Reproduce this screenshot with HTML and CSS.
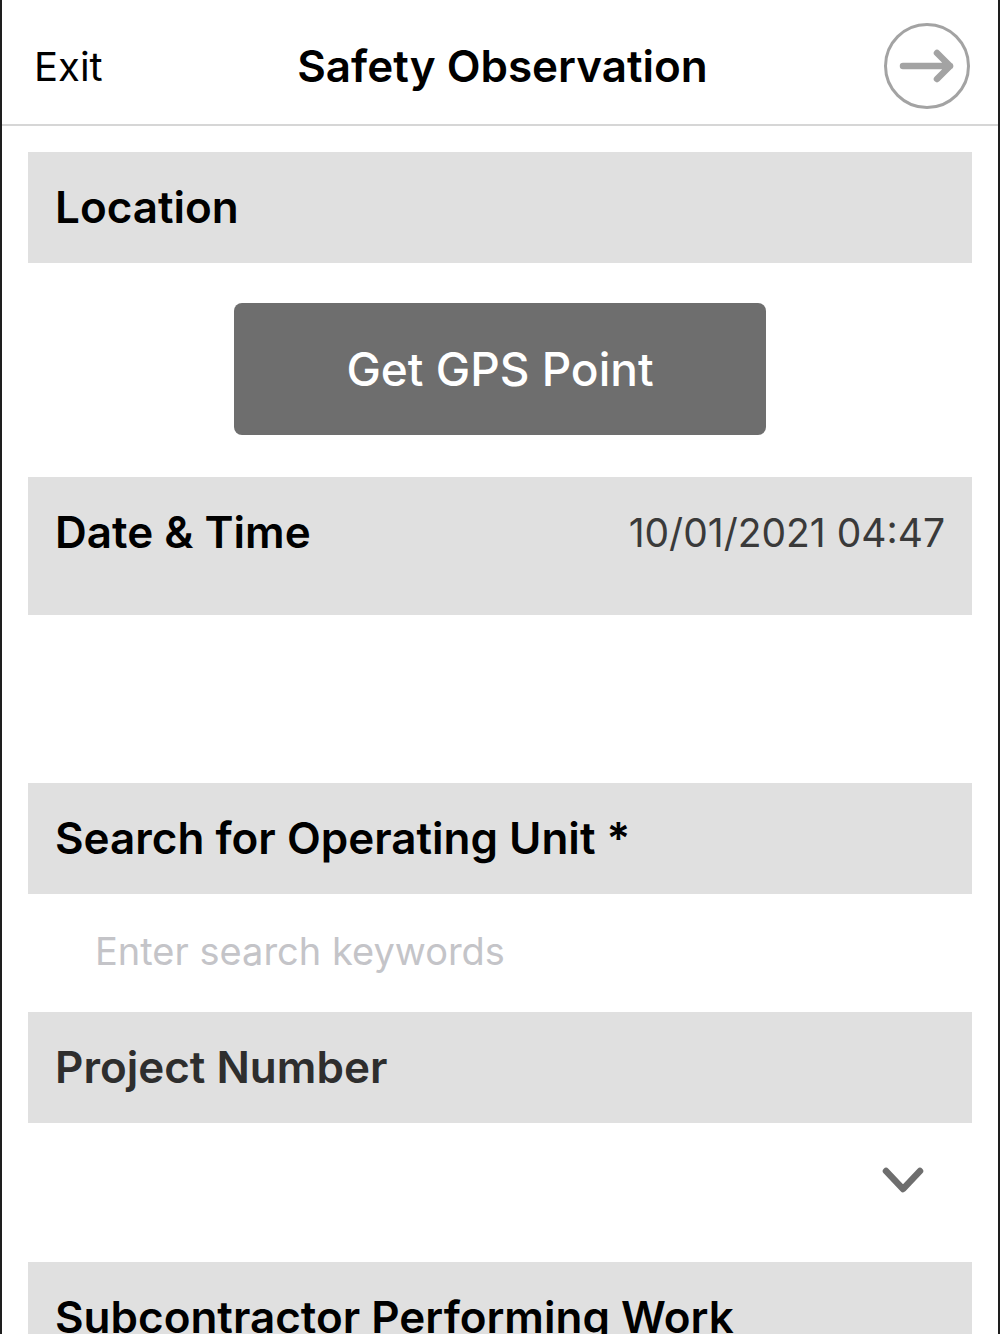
FILE: index.html
```html
<!DOCTYPE html>
<html lang="en">
<head>
    <meta charset="UTF-8">
    <meta name="viewport" content="width=device-width, initial-scale=1.0">
    <title>Safety Observation</title>
    <link rel="stylesheet" href="styles.css">
</head>
<body>
    <div class="screen">
        <header class="topbar">
            <span class="exit">Exit</span>
            <h1 class="title">Safety Observation</h1>
            <button class="next-btn" type="button" aria-label="Next">
                <svg width="88" height="88" viewBox="0 0 88 88">
                    <circle cx="44" cy="44" r="41.5" fill="none" stroke="#a3a3a3" stroke-width="3"/>
                    <path d="M20 44 H67 M54 31 L67 44 L54 57" fill="none" stroke="#a3a3a3" stroke-width="6.5" stroke-linecap="round" stroke-linejoin="round"/>
                </svg>
            </button>
        </header>

        <main class="form">
            <div class="field">
                <span class="field-label">Location</span>
            </div>

            <div class="gps-row">
                <button class="gps-btn" type="button">Get GPS Point</button>
            </div>

            <div class="field field-tall">
                <span class="field-label">Date &amp; Time</span>
                <span class="field-value">10/01/2021 04:47</span>
            </div>

            <div class="spacer"></div>

            <div class="field">
                <span class="field-label">Search for Operating Unit *</span>
            </div>
            <input class="search-input" type="text" placeholder="Enter search keywords">

            <div class="field">
                <span class="field-label muted">Project Number</span>
            </div>
            <div class="select-row">
                <svg width="44" height="28" viewBox="0 0 44 28">
                    <path d="M5 4 L22 22 L39 4" fill="none" stroke="#6e6e6e" stroke-width="6.5" stroke-linecap="round" stroke-linejoin="round"/>
                </svg>
            </div>

            <div class="field">
                <span class="field-label">Subcontractor Performing Work</span>
            </div>
        </main>
    </div>
</body>
</html>
```

FILE: styles.css
```css
body {
    margin: 0;
    font-family: Inter, "Noto Sans", sans-serif;
    background: #fff;
    overflow: hidden;
}
.screen {
    width: 1000px;
    height: 1334px;
    box-sizing: border-box;
    border-left: 2px solid #1e1e1e;
    border-right: 2px solid #1e1e1e;
    overflow: hidden;
}
.topbar {
    height: 126px;
    box-sizing: border-box;
    border-bottom: 2px solid #d6d6d6;
    display: grid;
    grid-template-columns: 1fr auto 1fr;
    align-items: center;
    padding: 8px 27px 0 32px;
}
.exit {
    font-size: 40px;
    color: #000;
}
.title {
    margin: 0;
    font-size: 44px;
    font-weight: 600;
    color: #000;
}
.next-btn {
    justify-self: end;
    background: none;
    border: none;
    padding: 0;
    display: flex;
}
.form {
    padding: 26px 26px 0;
}
.field {
    background-color: #e0e0e0;
    height: 111px;
    padding: 0 27px;
    display: flex;
    justify-content: space-between;
}
.field-tall {
    height: 138px;
}
.field-label {
    font-size: 44px;
    font-weight: 600;
    line-height: 111px;
    color: #000;
}
.field-label.muted {
    color: #2e2e2e;
}
.field-value {
    font-size: 39px;
    line-height: 111px;
    color: #3a3a3a;
}
.gps-row {
    padding: 40px 0 42px;
    display: flex;
    justify-content: center;
}
.gps-btn {
    width: 532px;
    height: 132px;
    background-color: #6e6e6e;
    color: #fff;
    border: none;
    border-radius: 8px;
    font-family: inherit;
    font-size: 46px;
    font-weight: 500;
}
.spacer {
    height: 168px;
}
.search-input {
    display: block;
    width: 100%;
    height: 114px;
    margin-bottom: 4px;
    box-sizing: border-box;
    border: none;
    outline: none;
    padding: 0 0 0 67px;
    font-family: inherit;
    font-size: 38px;
    background: transparent;
}
.search-input::placeholder {
    color: #c4c4c8;
}
.select-row {
    height: 139px;
    box-sizing: border-box;
    padding: 44px 47px 0 0;
    display: flex;
    justify-content: flex-end;
    align-items: flex-start;
}
```
